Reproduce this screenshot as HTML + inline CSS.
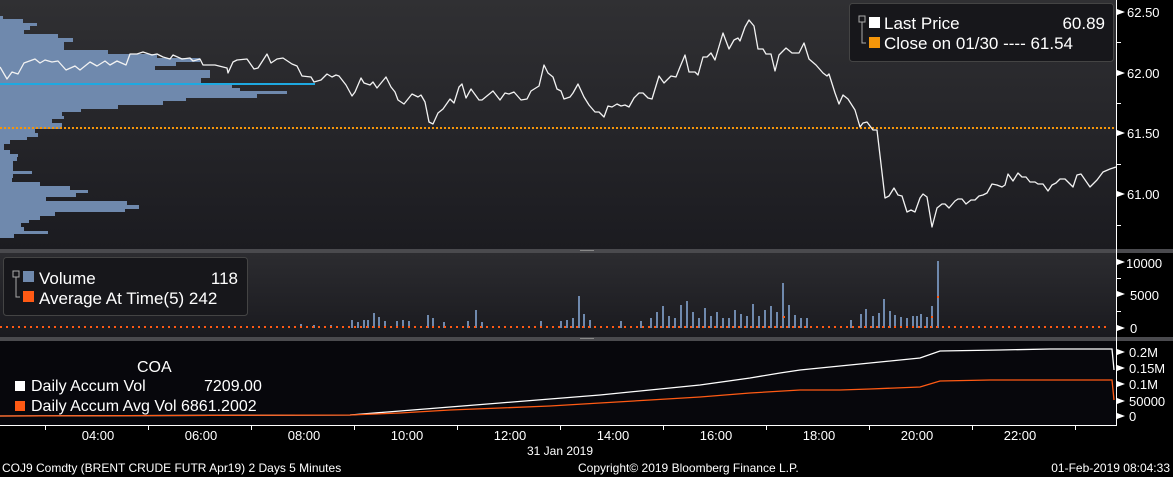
<!DOCTYPE html>
<html><head><meta charset="utf-8"><style>
html,body{margin:0;padding:0;background:#000;width:1173px;height:477px;overflow:hidden}
svg{display:block;font-family:"Liberation Sans","DejaVu Sans",sans-serif}
</style></head><body>
<svg width="1173" height="477" viewBox="0 0 1173 477" xmlns="http://www.w3.org/2000/svg">
<defs>
<linearGradient id="g1" x1="0" y1="0" x2="0" y2="1"><stop offset="0" stop-color="#303033"/><stop offset="1" stop-color="#1b1b20"/></linearGradient>
<linearGradient id="g2" x1="0" y1="0" x2="0" y2="1"><stop offset="0" stop-color="#2c2c30"/><stop offset="1" stop-color="#1a1a1f"/></linearGradient>
</defs>
<rect width="1173" height="477" fill="#000"/>
<rect x="0" y="0" width="1116" height="249" fill="url(#g1)"/>
<rect x="0" y="249" width="1173" height="4" fill="#4a4a4e"/>
<rect x="0" y="253" width="1116" height="84" fill="url(#g2)"/>
<rect x="0" y="337" width="1173" height="4" fill="#4a4a4e"/>
<rect x="0" y="341" width="1116" height="84" fill="#07070c"/>
<line x1="1116.5" y1="0" x2="1116.5" y2="426" stroke="#fff" stroke-width="1"/>
<line x1="0" y1="425.5" x2="1117" y2="425.5" stroke="#fff"/>
<rect x="580" y="250" width="14" height="1" fill="#888"/><rect x="580" y="338" width="14" height="1" fill="#888"/>
<!-- volume profile -->
<g fill="#6f89ad">
<rect x="0" y="16" width="3" height="222"/>
<rect x="0" y="19" width="23" height="4"/><rect x="0" y="23" width="37" height="3"/><rect x="0" y="26" width="30" height="4"/>
<rect x="0" y="30" width="24" height="4"/><rect x="0" y="34" width="58" height="4"/><rect x="0" y="38" width="73" height="4"/>
<rect x="0" y="42" width="64" height="8"/><rect x="0" y="50" width="108" height="4"/><rect x="0" y="54" width="157" height="4"/>
<rect x="0" y="58" width="200" height="4"/><rect x="0" y="62" width="176" height="4"/><rect x="0" y="66" width="155" height="4"/>
<rect x="0" y="70" width="210" height="8"/><rect x="0" y="78" width="201" height="6"/><rect x="0" y="84" width="232" height="4"/>
<rect x="0" y="88" width="240" height="3"/><rect x="0" y="91" width="287" height="3"/><rect x="0" y="94" width="257" height="4"/>
<rect x="0" y="98" width="186" height="3"/><rect x="0" y="101" width="163" height="4"/><rect x="0" y="105" width="118" height="4"/>
<rect x="0" y="109" width="81" height="3"/><rect x="0" y="112" width="62" height="4"/><rect x="0" y="116" width="64" height="3"/>
<rect x="0" y="119" width="52" height="4"/><rect x="0" y="123" width="62" height="6"/><rect x="0" y="129" width="35" height="4"/>
<rect x="0" y="133" width="38" height="4"/><rect x="0" y="137" width="27" height="3"/><rect x="0" y="140" width="10" height="4"/>
<rect x="0" y="144" width="4" height="6"/><rect x="0" y="150" width="10" height="4"/><rect x="0" y="154" width="18" height="3"/>
<rect x="0" y="157" width="17" height="4"/><rect x="0" y="161" width="13" height="6"/><rect x="0" y="167" width="13" height="4"/>
<rect x="0" y="171" width="32" height="3"/><rect x="0" y="174" width="13" height="4"/><rect x="0" y="178" width="12" height="4"/>
<rect x="0" y="182" width="40" height="4"/><rect x="0" y="186" width="70" height="4"/><rect x="0" y="190" width="88" height="3"/>
<rect x="0" y="193" width="76" height="4"/><rect x="0" y="197" width="46" height="4"/><rect x="0" y="201" width="127" height="4"/>
<rect x="0" y="205" width="139" height="4"/><rect x="0" y="209" width="125" height="3"/><rect x="0" y="212" width="55" height="4"/>
<rect x="0" y="216" width="40" height="4"/><rect x="0" y="220" width="29" height="3"/><rect x="0" y="223" width="21" height="4"/>
<rect x="0" y="227" width="24" height="4"/><rect x="0" y="231" width="48" height="3"/><rect x="0" y="234" width="14" height="4"/>
</g>
<rect x="0" y="83" width="315" height="2" fill="#1ea9e1"/>
<line x1="0" y1="128" x2="1116" y2="128" stroke="#f5960a" stroke-width="2" stroke-dasharray="2,2"/>
<!-- price line -->
<polyline fill="none" stroke="#f2f2f2" stroke-width="1.3" stroke-linejoin="round" points="0,67 7,79 12,72 18,74 24,63 35,59 40,63 45,60 52,62 58,61 66,70 75,66 80,70 90,62 97,66 105,61 110,65 117,61 126,65 130,54 137,54 143,52 152,55 157,54 163,57 170,59 173,55 182,59 190,58 193,61 200,59 203,65 215,65 227,68 228,73 233,62 237,60 247,59 254,69 258,68 267,54 271,63 277,59 283,58 292,64 297,66 302,76 311,77 314,82 321,80 327,74 332,77 336,75 339,76 346,85 352,96 355,92 361,78 364,83 370,85 373,82 377,88 386,77 391,87 395,92 398,100 404,104 412,94 418,97 421,95 425,102 429,122 433,124 438,113 443,109 450,99 454,103 459,87 462,84 466,98 471,89 479,100 482,100 493,91 500,100 505,93 509,94 514,92 521,100 527,99 531,91 539,86 544,65 548,73 553,77 557,89 561,91 564,99 570,97 573,93 578,84 584,97 589,105 595,112 599,112 604,117 608,106 612,107 617,104 621,106 625,105 629,107 634,98 639,93 643,93 648,98 652,99 659,76 664,83 671,76 676,77 680,67 685,55 689,72 695,72 698,75 703,57 707,57 711,53 715,60 723,33 729,49 734,40 738,38 740,41 745,27 749,20 754,26 758,49 763,49 766,54 771,54 775,71 779,55 786,48 792,53 799,53 804,43 809,59 816,65 823,73 827,76 829,74 835,93 839,104 843,95 848,99 855,110 860,127 863,123 867,122 873,130 877,130 885,198 889,196 894,188 898,195 902,196 907,212 911,210 915,212 920,198 923,194 927,197 932,227 937,208 942,204 945,204 949,208 955,201 958,199 962,199 966,204 971,200 975,200 979,196 983,195 987,193 992,184 997,185 1002,187 1005,185 1008,174 1013,181 1018,173 1022,177 1026,177 1030,182 1035,182 1038,184 1043,184 1048,191 1052,185 1056,183 1060,179 1065,179 1073,187 1077,175 1081,174 1090,187 1097,180 1103,172 1110,169 1116,167"/>
<!-- legend top -->
<rect x="849.5" y="3.5" width="264" height="58" rx="3" fill="#17171b" stroke="#444"/>
<rect x="859" y="16" width="6" height="6" fill="none" stroke="#aaa" stroke-width="1"/>
<path d="M862 22 V43 H866" fill="none" stroke="#aaa"/>
<rect x="869" y="17" width="11" height="11" fill="#fff"/>
<rect x="869" y="37" width="11" height="11" fill="#f5960a"/>
<g fill="#fff" font-size="17">
<text x="884" y="29">Last Price</text><text x="1105" y="29" text-anchor="end">60.89</text>
<text x="884" y="49">Close on 01/30 ---- 61.54</text>
</g>
<!-- right axis -->
<g fill="#fff" font-size="13">
<text x="1127" y="17">62.50</text><text x="1127" y="78">62.00</text><text x="1127" y="138">61.50</text><text x="1127" y="199">61.00</text>
<text x="1126" y="268">10000</text><text x="1130" y="300">5000</text><text x="1130" y="333">0</text>
<text x="1129" y="357">0.2M</text><text x="1129" y="373">0.15M</text><text x="1129" y="389">0.1M</text><text x="1129" y="406">50000</text><text x="1129" y="421">0</text>
</g>
<g fill="#fff">
<path d="M1117 9 l8 3 -8 3z"/><path d="M1117 70 l8 3 -8 3z"/><path d="M1117 130 l8 3 -8 3z"/><path d="M1117 191 l8 3 -8 3z"/>
<path d="M1117 259 l8 3 -8 3z"/><path d="M1117 291 l8 3 -8 3z"/><path d="M1117 325 l8 3 -8 3z"/>
<path d="M1117 349 l8 3 -8 3z"/><path d="M1117 365 l8 3 -8 3z"/><path d="M1117 381 l8 3 -8 3z"/><path d="M1117 398 l8 3 -8 3z"/><path d="M1117 413 l8 3 -8 3z"/>
<rect x="1117" y="42" width="4" height="1"/><rect x="1117" y="103" width="4" height="1"/><rect x="1117" y="164" width="4" height="1"/><rect x="1117" y="225" width="4" height="1"/>
<rect x="1117" y="278" width="4" height="1"/><rect x="1117" y="311" width="4" height="1"/>
</g>
<!-- volume bars -->
<g fill="#6f89ad">
<rect x="300" y="324" width="2" height="4"/><rect x="313" y="325" width="2" height="3"/><rect x="330" y="325" width="2" height="3"/>
<rect x="351" y="320" width="2" height="8"/><rect x="357" y="322" width="2" height="6"/><rect x="363" y="320" width="2" height="8"/><rect x="367" y="320" width="2" height="8"/><rect x="373" y="313" width="2" height="15"/><rect x="378" y="317" width="2" height="11"/><rect x="384" y="321" width="2" height="7"/><rect x="396" y="321" width="2" height="7"/><rect x="402" y="320" width="2" height="8"/><rect x="408" y="321" width="2" height="7"/>
<rect x="427" y="315" width="2" height="13"/><rect x="432" y="318" width="2" height="10"/><rect x="443" y="322" width="2" height="6"/><rect x="467" y="321" width="2" height="7"/><rect x="475" y="310" width="2" height="18"/><rect x="481" y="322" width="2" height="6"/>
<rect x="540" y="321" width="2" height="7"/><rect x="560" y="321" width="2" height="7"/><rect x="566" y="320" width="2" height="8"/><rect x="572" y="318" width="2" height="10"/><rect x="578" y="296" width="2" height="32"/><rect x="583" y="314" width="2" height="14"/><rect x="589" y="320" width="2" height="8"/>
<rect x="620" y="321" width="2" height="7"/><rect x="640" y="321" width="2" height="7"/><rect x="650" y="318" width="2" height="10"/><rect x="656" y="312" width="2" height="16"/><rect x="662" y="306" width="2" height="22"/><rect x="668" y="316" width="2" height="12"/><rect x="674" y="318" width="2" height="10"/><rect x="680" y="305" width="2" height="23"/><rect x="686" y="301" width="2" height="27"/><rect x="692" y="312" width="2" height="16"/><rect x="698" y="318" width="2" height="10"/>
<rect x="704" y="308" width="2" height="20"/><rect x="710" y="316" width="2" height="12"/><rect x="716" y="312" width="2" height="16"/><rect x="722" y="318" width="2" height="10"/><rect x="728" y="318" width="2" height="10"/><rect x="734" y="310" width="2" height="18"/><rect x="740" y="314" width="2" height="14"/><rect x="746" y="316" width="2" height="12"/><rect x="752" y="304" width="2" height="24"/><rect x="758" y="316" width="2" height="12"/><rect x="764" y="310" width="2" height="18"/><rect x="770" y="306" width="2" height="22"/><rect x="776" y="312" width="2" height="16"/><rect x="782" y="283" width="2" height="45"/><rect x="788" y="305" width="2" height="23"/><rect x="794" y="315" width="2" height="13"/><rect x="800" y="318" width="2" height="10"/><rect x="806" y="318" width="2" height="10"/>
<rect x="850" y="320" width="2" height="8"/><rect x="860" y="314" width="2" height="14"/><rect x="865" y="309" width="2" height="19"/><rect x="872" y="316" width="2" height="12"/><rect x="878" y="313" width="2" height="15"/><rect x="883" y="299" width="2" height="29"/><rect x="889" y="311" width="2" height="17"/><rect x="894" y="315" width="2" height="13"/><rect x="900" y="317" width="2" height="11"/><rect x="906" y="318" width="2" height="10"/><rect x="912" y="316" width="2" height="12"/><rect x="916" y="316" width="2" height="12"/><rect x="920" y="314" width="2" height="14"/><rect x="926" y="317" width="2" height="11"/><rect x="931" y="306" width="2" height="22"/><rect x="937" y="261" width="2" height="67"/>
</g>
<line x1="0" y1="327" x2="1110" y2="327" stroke="#ff5a14" stroke-width="2" stroke-dasharray="2,4"/>
<g fill="#ff5a14"><rect x="937" y="296" width="2" height="2"/><rect x="931" y="316" width="2" height="2"/><rect x="783" y="316" width="2" height="2"/></g>
<!-- legend vol -->
<rect x="3.5" y="257.5" width="244" height="58" rx="3" fill="#17171b" stroke="#444"/>
<rect x="13" y="271" width="6" height="6" fill="none" stroke="#aaa"/>
<path d="M16 277 V297 H20" fill="none" stroke="#aaa"/>
<rect x="23" y="271" width="11" height="11" fill="#6f89ad"/>
<rect x="23" y="291" width="11" height="11" fill="#ff5a14"/>
<g fill="#fff" font-size="17"><text x="39" y="284">Volume</text><text x="238" y="284" text-anchor="end">118</text><text x="39" y="304">Average At Time(5) 242</text></g>
<!-- accum -->
<polyline fill="none" stroke="#fff" stroke-width="1.3" points="0,416 350,415 400,411 450,407 500,403 550,399 600,395 650,390 700,385 750,378 780,373 800,370 840,366 880,362 920,358 940,351 1000,350 1050,349 1112,349 1114,370"/>
<polyline fill="none" stroke="#ff5a14" stroke-width="1.3" points="0,416 350,415 400,413 450,410 500,408 550,406 600,403 650,400 700,397 750,393 800,390 840,390 870,389 920,387 940,381 990,380 1112,380 1114,400"/>
<g fill="#fff" font-size="16"><text x="137" y="372">COA</text><text x="31" y="391">Daily Accum Vol</text><text x="204" y="391">7209.00</text><text x="31" y="411">Daily Accum Avg Vol 6861.2002</text></g>
<rect x="15" y="381" width="10" height="10" fill="#fff"/><rect x="15" y="401" width="10" height="10" fill="#ff5a14"/>
<!-- x axis -->
<g stroke="#fff"><line x1="45.5" y1="426" x2="45.5" y2="430"/><line x1="148.5" y1="426" x2="148.5" y2="430"/><line x1="251.5" y1="426" x2="251.5" y2="430"/><line x1="354.5" y1="426" x2="354.5" y2="430"/><line x1="457.5" y1="426" x2="457.5" y2="430"/><line x1="560.5" y1="426" x2="560.5" y2="430"/><line x1="663.5" y1="426" x2="663.5" y2="430"/><line x1="766.5" y1="426" x2="766.5" y2="430"/><line x1="869.5" y1="426" x2="869.5" y2="430"/><line x1="972.5" y1="426" x2="972.5" y2="430"/><line x1="1075.5" y1="426" x2="1075.5" y2="430"/></g>
<g fill="#fff" font-size="13" text-anchor="middle">
<text x="98" y="440">04:00</text><text x="201" y="440">06:00</text><text x="304" y="440">08:00</text><text x="407" y="440">10:00</text><text x="510" y="440">12:00</text><text x="613" y="440">14:00</text><text x="716" y="440">16:00</text><text x="819" y="440">18:00</text><text x="917" y="440">20:00</text><text x="1020" y="440">22:00</text>
<text x="560" y="455" font-size="12">31 Jan 2019</text>
</g>
<g fill="#fff" font-size="12"><text x="2" y="472">COJ9 Comdty (BRENT CRUDE FUTR  Apr19) 2 Days 5 Minutes</text><text x="578" y="472">Copyright© 2019 Bloomberg Finance L.P.</text><text x="1170" y="472" text-anchor="end">01-Feb-2019 08:04:33</text></g>
</svg>
</body></html>
